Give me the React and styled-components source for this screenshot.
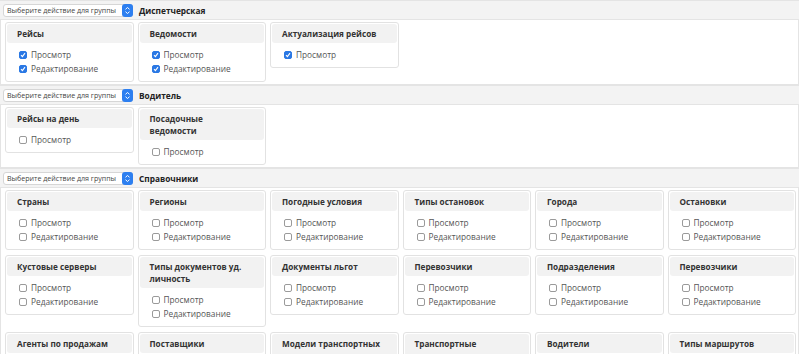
import React from "react";
import styled, { createGlobalStyle } from "styled-components";

const GlobalStyle = createGlobalStyle`
  html, body {
    margin: 0;
    padding: 0;
    background: #fff;
  }
  body {
    font-family: "Open Sans", "Noto Sans", sans-serif;
    color: #333;
  }
`;

const Page = styled.div`
  width: 799px;
  overflow: hidden;
  height: 354px;
`;

const Group = styled.section`
  display: flex;
  flex-direction: column;
`;

const GroupHeader = styled.div`
  display: flex;
  align-items: center;
  gap: 6px;
  height: 18px;
  padding-left: 3px;
  background: #f3f3f3;
  border-top: 1px solid #e4e4e4;
`;

const GroupTitle = styled.span`
  font-size: 8.3px;
  font-weight: 700;
  color: #222;
`;

const SelectBox = styled.div`
  display: flex;
  align-items: center;
  justify-content: space-between;
  box-sizing: border-box;
  width: 130px;
  height: 13px;
  padding-left: 3px;
  background: #fff;
  border: 1px solid #d6d6d6;
  border-radius: 3px;
  font-size: 7.1px;
  color: #444;
  white-space: nowrap;
`;

const SelectArrow = styled.span`
  display: flex;
  align-items: center;
  justify-content: center;
  width: 11px;
  height: 13px;
  margin-right: -1px;
  border-radius: 3px;
  background: #2d7ff0;
`;

const GroupBody = styled.div`
  display: flex;
  flex-wrap: wrap;
  align-items: flex-start;
  gap: 5px 4px;
  padding: 2px 2px 2px 4px;
  border: 1px solid #e4e4e4;
  background: #fff;
`;

const Card = styled.div`
  width: calc((100% - 20px) / 6);
  box-sizing: border-box;
  border: 1px solid #e2e2e2;
  border-radius: 3px;
  padding: 1px;
`;

const CardHeader = styled.div`
  background: #f2f2f2;
  border-radius: 3px;
  padding: 4px 14px 3px 10px;
  font-size: 8.2px;
  line-height: 12px;
  font-weight: 700;
  color: #333;
`;

const PermList = styled.div`
  display: flex;
  flex-direction: column;
  padding: 5px 0 4px 12px;
`;

const PermRow = styled.label`
  display: flex;
  align-items: center;
  gap: 4px;
  height: 14px;
  line-height: 14px;
  font-size: 8.3px;
  color: #555;
`;

const Box = styled.span`
  display: flex;
  align-items: center;
  justify-content: center;
  box-sizing: border-box;
  flex: none;
  width: 8px;
  height: 8px;
  border-radius: 2px;
  border: 1px solid ${({ $checked }) => ($checked ? "#2a78e4" : "#9a9a9a")};
  background: ${({ $checked }) => ($checked ? "#2a78e4" : "#fff")};
`;

const Check = ({ checked }) => (
  <Box $checked={checked}>
    {checked && (
      <svg width="6" height="6" viewBox="0 0 6 6">
        <path d="M1 3.2 L2.4 4.6 L5 1.2" fill="none" stroke="#fff" strokeWidth="1.1" />
      </svg>
    )}
  </Box>
);

const ArrowIcon = () => (
  <svg width="7" height="9" viewBox="0 0 7 9">
    <path d="M1.5 3.3 L3.5 1.5 L5.5 3.3 M1.5 5.7 L3.5 7.5 L5.5 5.7" fill="none" stroke="#fff" strokeWidth="1" />
  </svg>
);

const BOTH = ["Просмотр", "Редактирование"];
const VIEW = ["Просмотр"];

const groups = [
  {
    title: "Диспетчерская",
    checked: true,
    cards: [
      { title: "Рейсы", perms: BOTH },
      { title: "Ведомости", perms: BOTH },
      { title: "Актуализация рейсов", perms: VIEW },
    ],
  },
  {
    title: "Водитель",
    checked: false,
    cards: [
      { title: "Рейсы на день", perms: VIEW },
      { title: "Посадочные ведомости", perms: VIEW },
    ],
  },
  {
    title: "Справочники",
    checked: false,
    cards: [
      { title: "Страны", perms: BOTH },
      { title: "Регионы", perms: BOTH },
      { title: "Погодные условия", perms: BOTH },
      { title: "Типы остановок", perms: BOTH },
      { title: "Города", perms: BOTH },
      { title: "Остановки", perms: BOTH },
      { title: "Кустовые серверы", perms: BOTH },
      { title: "Типы документов уд. личность", perms: BOTH },
      { title: "Документы льгот", perms: BOTH },
      { title: "Перевозчики", perms: BOTH },
      { title: "Подразделения", perms: BOTH },
      { title: "Перевозчики", perms: BOTH },
      { title: "Агенты по продажам", perms: BOTH },
      { title: "Поставщики", perms: BOTH },
      { title: "Модели транспортных средств", perms: BOTH },
      { title: "Транспортные средства", perms: BOTH },
      { title: "Водители", perms: BOTH },
      { title: "Типы маршрутов", perms: BOTH },
    ],
  },
];

export default function App() {
  return (
    <Page>
      <GlobalStyle />
      {groups.map((g) => (
        <Group key={g.title}>
          <GroupHeader>
            <SelectBox>
              Выберите действие для группы
              <SelectArrow>
                <ArrowIcon />
              </SelectArrow>
            </SelectBox>
            <GroupTitle>{g.title}</GroupTitle>
          </GroupHeader>
          <GroupBody>
            {g.cards.map((c, i) => (
              <Card key={i}>
                <CardHeader>{c.title}</CardHeader>
                <PermList>
                  {c.perms.map((p) => (
                    <PermRow key={p}>
                      <Check checked={g.checked} />
                      {p}
                    </PermRow>
                  ))}
                </PermList>
              </Card>
            ))}
          </GroupBody>
        </Group>
      ))}
    </Page>
  );
}
